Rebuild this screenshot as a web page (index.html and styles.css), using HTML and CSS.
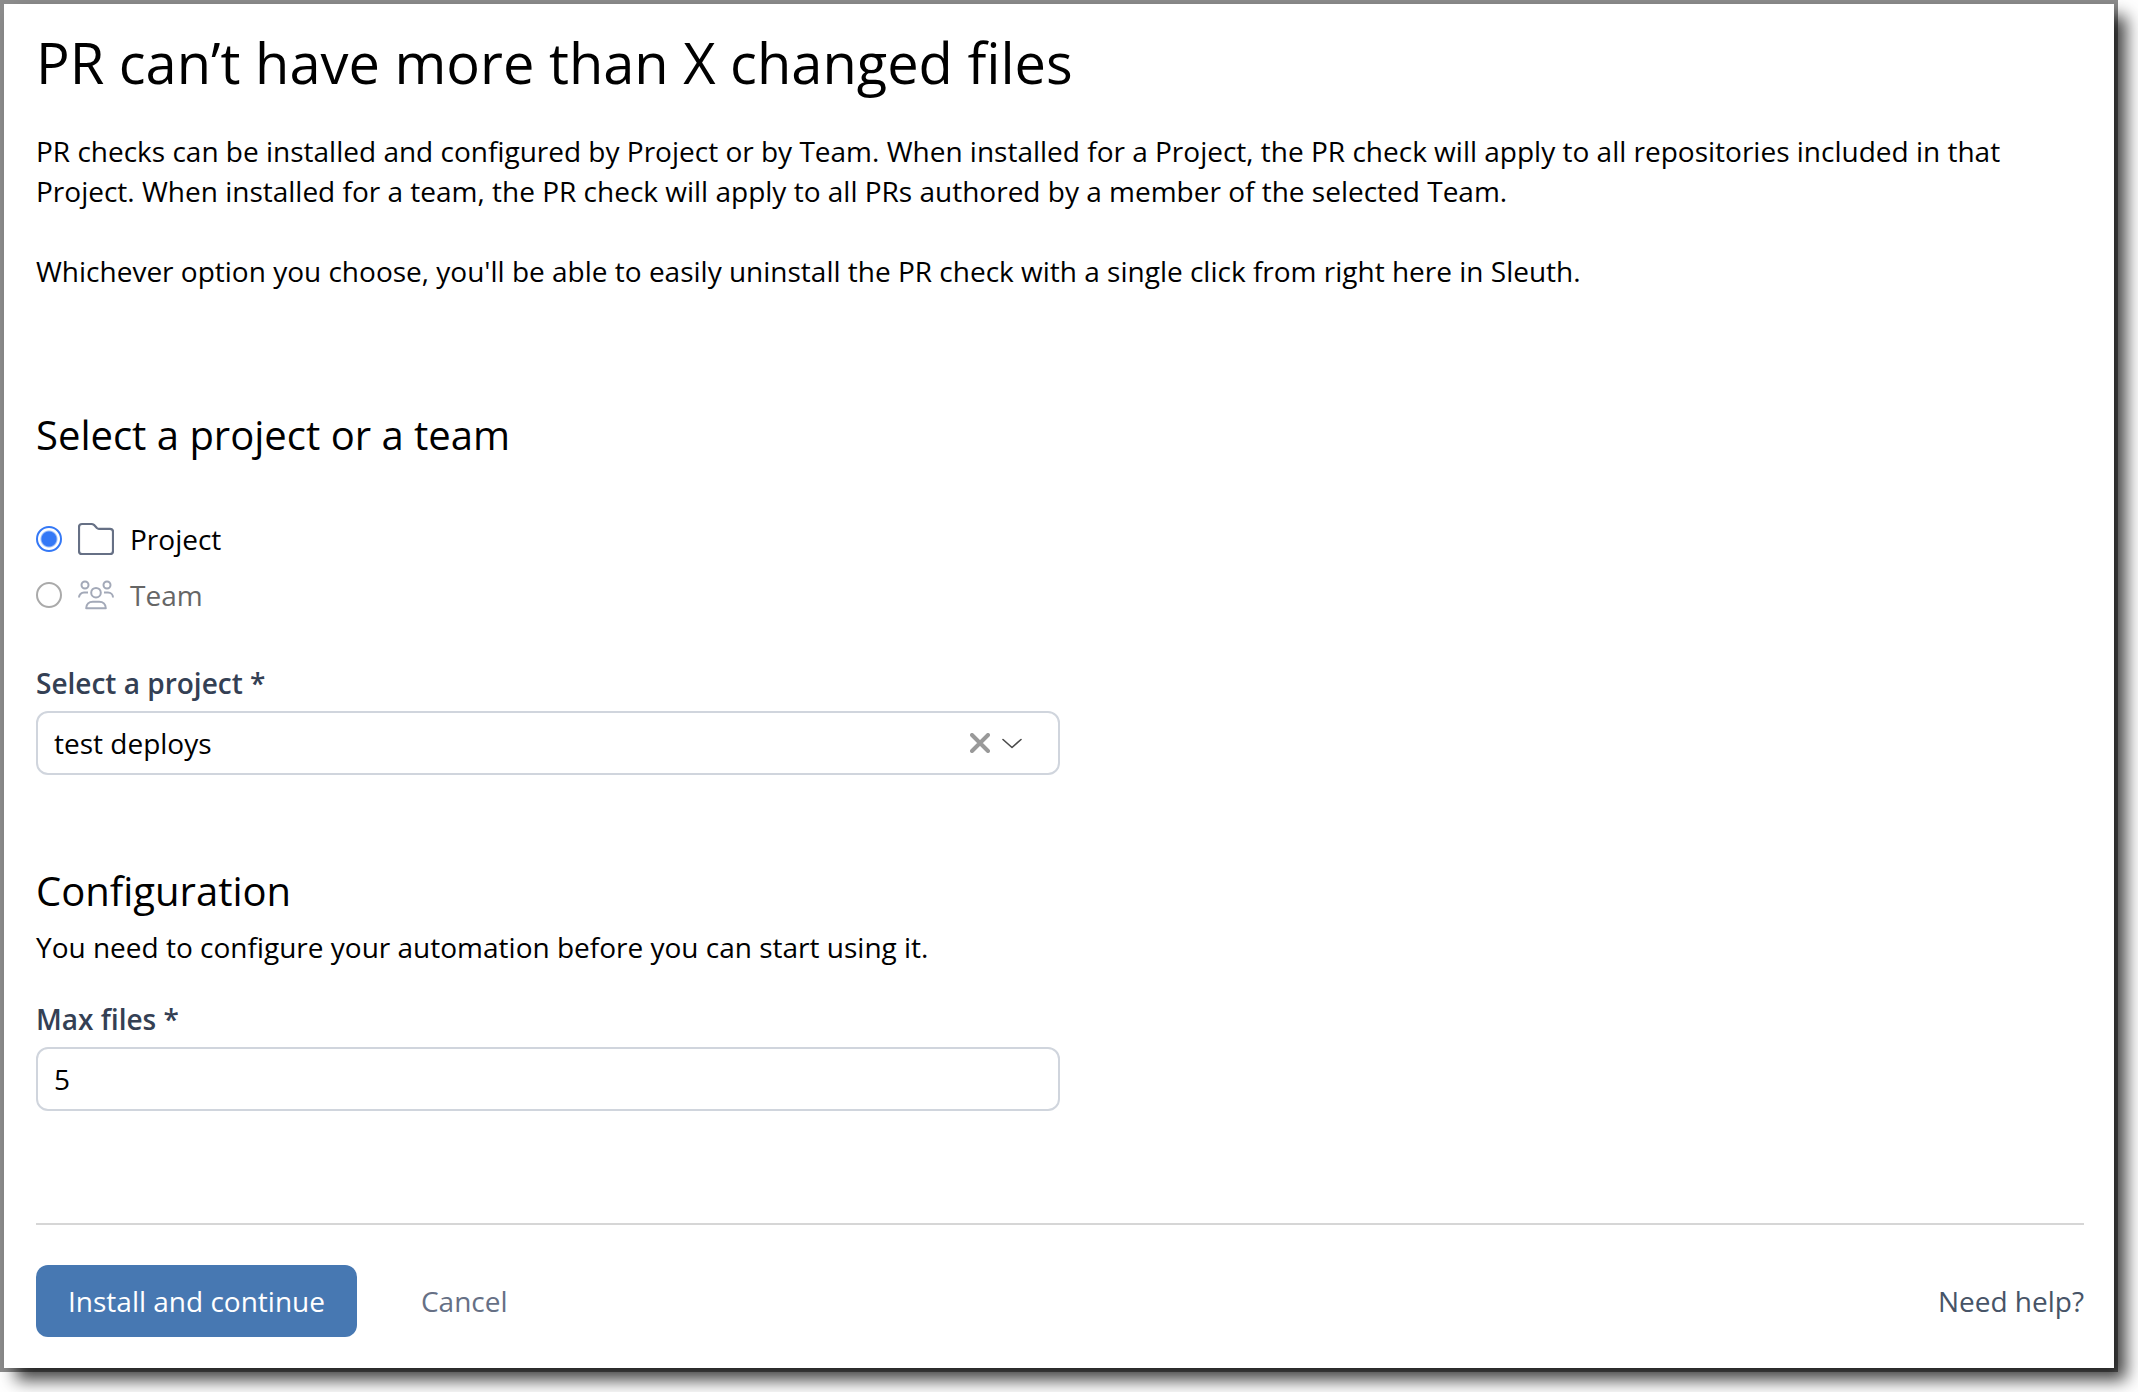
FILE: index.html
```html
<!DOCTYPE html>
<html lang="en">
<head>
  <meta charset="utf-8">
  <title>PR can’t have more than X changed files</title>
  <link rel="stylesheet" href="styles.css">
</head>
<body>
  <main class="panel">
    <form class="form">
      <h1 class="title">PR can’t have more than X changed files</h1>
      <div class="intro">
        <p>PR checks can be installed and configured by Project or by Team. When installed for a Project, the PR check will apply to all repositories included in that Project. When installed for a team, the PR check will apply to all PRs authored by a member of the selected Team.</p>
        <p>Whichever option you choose, you'll be able to easily uninstall the PR check with a single click from right here in Sleuth.</p>
      </div>

      <section class="target">
        <h2 class="heading" id="target-heading">Select a project or a team</h2>
        <div class="options" role="radiogroup" aria-labelledby="target-heading">
          <label class="option">
            <input class="radio" type="radio" name="target" value="project" checked>
            <svg class="icon" viewBox="0 0 36 36" fill="none" stroke="#667085" stroke-width="2.200" stroke-linejoin="round" aria-hidden="true">
              <path d="M1 6a3 3 0 0 1 3-3h9.500a4 4 0 0 1 2.400.8l3 3.200a3 3 0 0 0 2 .8H32a3 3 0 0 1 3 3V30a3 3 0 0 1-3 3H4a3 3 0 0 1-3-3z"/>
            </svg>
            <span>Project</span>
          </label>
          <label class="option option-muted">
            <input class="radio" type="radio" name="target" value="team">
            <svg class="icon" viewBox="0 0 36 36" fill="none" stroke="#a3a9b8" stroke-width="2" stroke-linejoin="round" aria-hidden="true">
              <circle cx="7" cy="8" r="3.500"/>
              <circle cx="29" cy="8" r="3.500"/>
              <circle cx="18" cy="15.700" r="4.800"/>
              <path d="M1 20.500a5 5 0 0 1 5-5h4M35 20.500a5 5 0 0 0-5-5h-4"/>
              <path d="M8.200 31.300c0-4 2.800-6.600 6.600-6.600h6.400c3.800 0 6.600 2.600 6.600 6.600z"/>
            </svg>
            <span>Team</span>
          </label>
        </div>
        <div class="field">
          <label class="label" for="project">Select a project *</label>
          <div class="select-wrap">
            <select class="control" id="project">
              <option selected>test deploys</option>
            </select>
            <div class="select-tools">
              <button class="clear" type="button" aria-label="Clear selection">
                <svg width="20" height="20" viewBox="0 0 20 20" stroke="#999999" stroke-width="4" stroke-linecap="round" aria-hidden="true">
                  <path d="M2 2l16 16M18 2L2 18"/>
                </svg>
              </button>
              <svg width="20" height="20" viewBox="0 0 20 20" fill="none" stroke="#4a4a4a" stroke-width="1.600" stroke-linecap="round" stroke-linejoin="round" aria-hidden="true">
                <path d="M1 6.500l9 8 9-8"/>
              </svg>
            </div>
          </div>
        </div>
      </section>

      <section class="config">
        <h2 class="heading">Configuration</h2>
        <p class="hint">You need to configure your automation before you can start using it.</p>
        <div class="field">
          <label class="label" for="max-files">Max files *</label>
          <input class="control" id="max-files" type="text" inputmode="numeric" value="5">
        </div>
      </section>

      <footer class="actions">
        <button class="submit" type="submit">Install and continue</button>
        <button class="cancel" type="button">Cancel</button>
        <a class="help" href="#">Need help?</a>
      </footer>
    </form>
  </main>
</body>
</html>
```
FILE: styles.css
```css
* {
  box-sizing: border-box;
}

body {
  margin: 0;
  background: #fff;
  color: #000;
  font: 28px/40px "Open Sans", sans-serif;
}

h1,
h2,
p {
  margin: 0;
  font-weight: 400;
}

button,
input,
select {
  margin: 0;
  font: inherit;
}

.panel {
  margin: 4px 24px 24px 4px;
  padding: 18px 30px 31px 32px;
  background: #fff;
  box-shadow:
    0 0 0 4px rgba(0, 0, 0, 0.45),
    12px 12px 16px rgba(0, 0, 0, 0.75);
}

.title {
  font-size: 56px;
  line-height: 80px;
}

.intro {
  display: grid;
  gap: 40px;
  margin-top: 29px;
}

.target {
  margin-top: 116px;
}

.heading {
  font-size: 40px;
  line-height: 56px;
}

.options {
  display: grid;
  justify-items: start;
  gap: 16px;
  margin: 56px 0 48px;
}

.option {
  display: flex;
  align-items: center;
  gap: 16px;
}

.option-muted {
  color: #666;
}

.radio {
  width: 26px;
  height: 26px;
  appearance: none;
  border: 2px solid #aaa;
  border-radius: 50%;
  background: #fff;
}

.radio:checked {
  border-color: #3478f6;
  background: radial-gradient(circle, #3478f6 7px, #fff 9px);
}

.icon {
  width: 36px;
  height: 36px;
}

.field {
  display: grid;
  gap: 8px;
  max-width: 1024px;
}

.label {
  color: #344054;
  font-weight: 600;
}

.control {
  width: 100%;
  height: 64px;
  padding: 0 16px;
  appearance: none;
  border: 2px solid #d0d5dd;
  border-radius: 12px;
  background: #fff;
  color: #000;
}

.select-wrap {
  position: relative;
}

.select-tools {
  position: absolute;
  inset: 0 38px 0 auto;
  display: flex;
  align-items: center;
  gap: 12px;
  pointer-events: none;
}

.clear {
  display: flex;
  padding: 0;
  border: 0;
  background: none;
  pointer-events: auto;
}

.config {
  margin-top: 88px;
}

.hint {
  margin: 8px 0 32px;
}

.actions {
  display: flex;
  align-items: center;
  gap: 64px;
  margin-top: 112px;
  padding-top: 40px;
  border-top: 2px solid #d6d6d6;
}

.submit {
  height: 72px;
  padding: 0 32px;
  border: 0;
  border-radius: 12px;
  background: #4778b2;
  color: #fff;
}

.cancel {
  padding: 0;
  border: 0;
  background: none;
  color: #667085;
}

.help {
  margin-left: auto;
  color: #475467;
  text-decoration: none;
}
```
